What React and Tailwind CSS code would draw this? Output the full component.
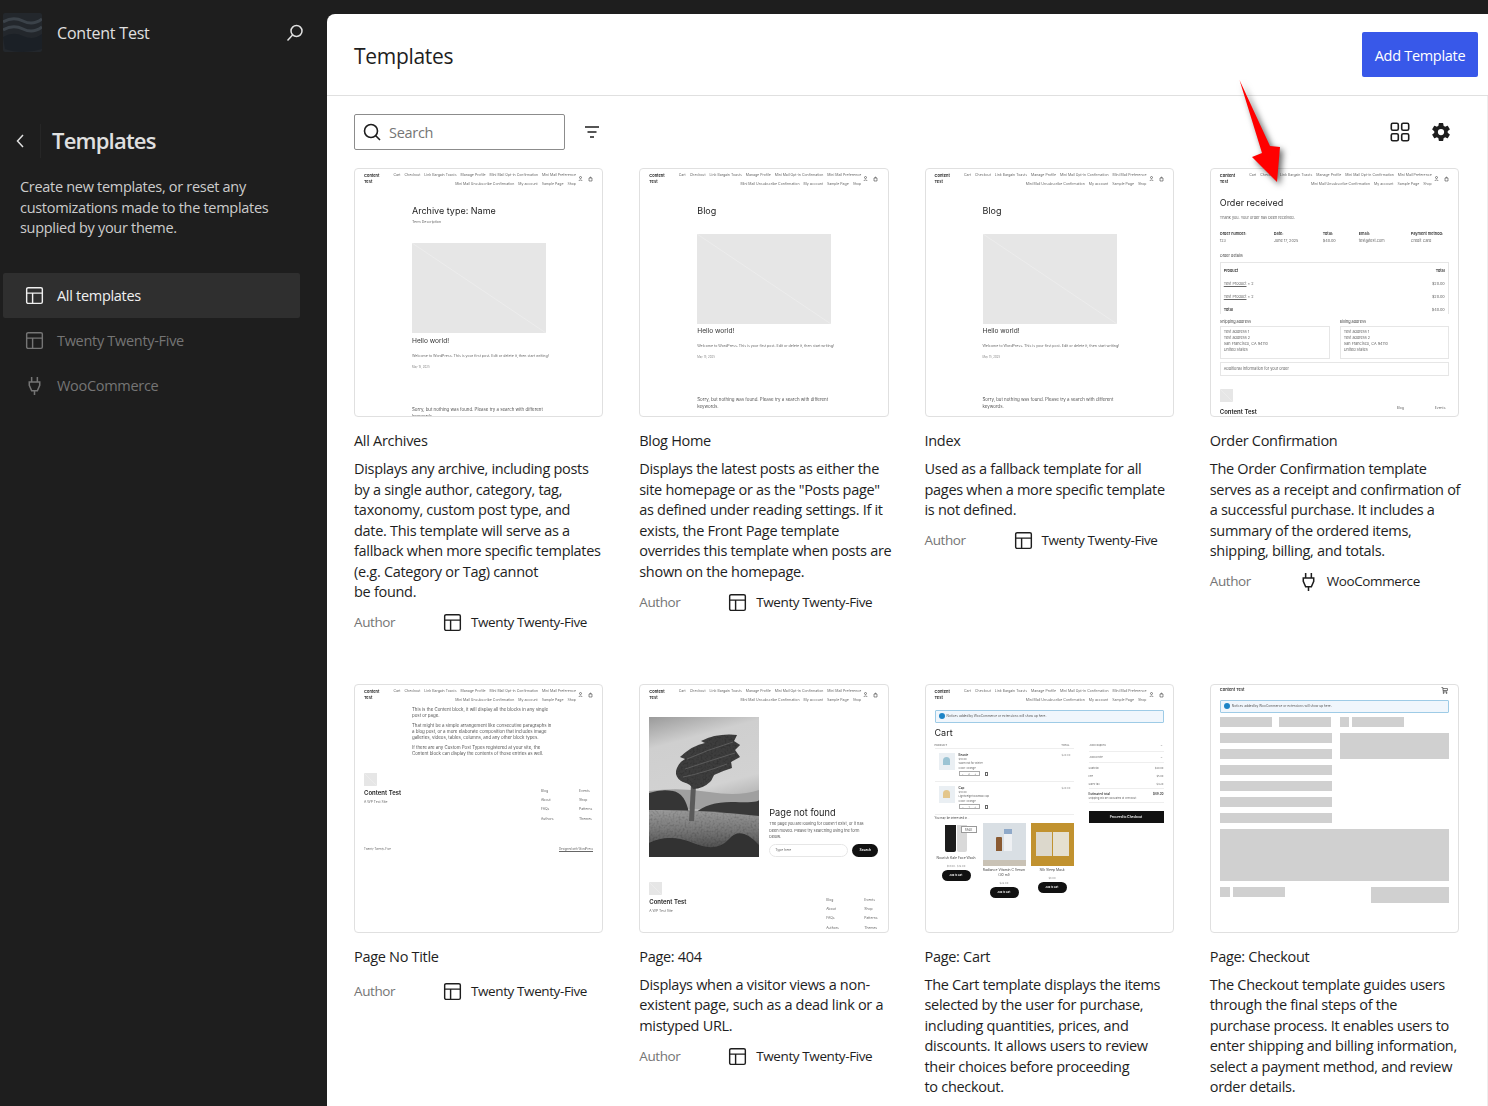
import { IoSettingsSharp } from "react-icons/io5";

const sans = "font-['Open_Sans','Noto_Sans',sans-serif]";

const LayoutIcon = ({ className }) => (
  <svg viewBox="0 0 20 20" fill="none" stroke="currentColor" strokeWidth="1.5" className={className}>
    <rect x="1.75" y="1.75" width="16.5" height="16.5" rx="1.5" />
    <path d="M2 7.5h16M8 7.5V18" />
  </svg>
);

const PlugIcon = ({ className }) => (
  <svg viewBox="0 0 20 20" fill="none" stroke="currentColor" strokeWidth="1.6" className={className}>
    <path d="M7 1v5M13 1v5M4.5 6.2h11v3.6L13 15.5h-6L4.5 9.8zM10 15.5V20" />
  </svg>
);

const cards = [
  {
    title: "All Archives",
    desc: "Displays any archive, including posts\nby a single author, category, tag,\ntaxonomy, custom post type, and\ndate. This template will serve as a\nfallback when more specific templates\n(e.g. Category or Tag) cannot\nbe found.",
    author: "Twenty Twenty-Five",
    thumb: "archive",
  },
  {
    title: "Blog Home",
    desc: "Displays the latest posts as either the\nsite homepage or as the \"Posts page\"\nas defined under reading settings. If it\nexists, the Front Page template\noverrides this template when posts are\nshown on the homepage.",
    author: "Twenty Twenty-Five",
    thumb: "blog",
  },
  {
    title: "Index",
    desc: "Used as a fallback template for all\npages when a more specific template\nis not defined.",
    author: "Twenty Twenty-Five",
    thumb: "blog",
  },
  {
    title: "Order Confirmation",
    desc: "The Order Confirmation template\nserves as a receipt and confirmation of\na successful purchase. It includes a\nsummary of the ordered items,\nshipping, billing, and totals.",
    author: "WooCommerce",
    thumb: "order",
    plug: true,
  },
  {
    title: "Page No Title",
    desc: "",
    author: "Twenty Twenty-Five",
    thumb: "notitle",
  },
  {
    title: "Page: 404",
    desc: "Displays when a visitor views a non-\nexistent page, such as a dead link or a\nmistyped URL.",
    author: "Twenty Twenty-Five",
    thumb: "404",
  },
  {
    title: "Page: Cart",
    desc: "The Cart template displays the items\nselected by the user for purchase,\nincluding quantities, prices, and\ndiscounts. It allows users to review\ntheir choices before proceeding\nto checkout.",
    author: "WooCommerce",
    thumb: "cart",
    plug: true,
  },
  {
    title: "Page: Checkout",
    desc: "The Checkout template guides users\nthrough the final steps of the\npurchase process. It enables users to\nenter shipping and billing information,\nselect a payment method, and review\norder details.",
    author: "WooCommerce",
    thumb: "checkout",
    plug: true,
  },
];

const MiniNav = () => (
  <div className="flex pl-[10px] pt-[3px] h-[20px]">
    <div className="w-[24px] mt-[2px] text-[4px] leading-[6px] font-semibold text-[#222]">Content Test</div>
    <div className="w-[188px] text-[3.5px] leading-[9px] text-[#666] text-right whitespace-nowrap">
      <div className="flex justify-end gap-[4px]">
        <span>Cart</span><span>Checkout</span><span>Link Bargain Toasts</span><span>Manage Profile</span><span>Mini Mail Opt-in Confirmation</span><span>Mini Mail Preference</span>
      </div>
      <div className="flex justify-end gap-[4px]">
        <span>Mini Mail Unsubscribe Confirmation</span><span>My account</span><span>Sample Page</span><span>Shop</span>
      </div>
    </div>
    <svg viewBox="0 0 16 6" fill="none" stroke="#222" strokeWidth="0.5" className="ml-[2px] mt-[5px] w-[16px] h-[6px]">
      <circle cx="2.5" cy="1.5" r="1" />
      <path d="M0.8 5C1 3.6 4 3.6 4.2 5" />
      <path d="M11 2h3v3h-3zM11.8 2C11.8 0.8 13.2 0.8 13.2 2" />
    </svg>
  </div>
);

const Placeholder = () => (
  <svg viewBox="0 0 134 90" preserveAspectRatio="none" className="w-[134px] h-[90px] block">
    <rect width="134" height="90" fill="#e6e6e6" />
    <path d="M0 0L134 90" stroke="#ececec" strokeWidth="1" />
  </svg>
);

const MiniSquare = () => (
  <svg viewBox="0 0 13 13" className="w-[13px] h-[13px] block">
    <rect width="13" height="13" fill="#e6e6e6" />
    <path d="M0 0L13 13" stroke="#ececec" strokeWidth="1" />
  </svg>
);

const MiniFooter = () => (
  <div className="flex justify-between px-[10px]">
    <div className="pt-[3px]">
      <MiniSquare />
      <div className="mt-[3px] text-[6px] leading-[8px] font-semibold text-[#222]">Content Test</div>
      <div className="mt-[3px] text-[3.4px] leading-[5px] text-[#666]">A WP Test Site</div>
    </div>
    <div className="flex mt-[17px] w-[52px] justify-between text-[3.4px] leading-[9.4px] text-[#666]">
      <div><div>Blog</div><div>About</div><div>FAQs</div><div>Authors</div></div>
      <div className="w-[14px]"><div>Events</div><div>Shop</div><div>Patterns</div><div>Themes</div></div>
    </div>
  </div>
);

const ArchiveThumb = ({ blog }) => (
  <div>
    <MiniNav />
    <div className="ml-[58px] w-[160px] pt-[17px]">
      <div className="text-[9px] leading-[12px] text-[#222]">{blog ? "Blog" : "Archive type: Name"}</div>
      {blog ? <div className="h-[17px]" /> : <div className="mt-[3px] mb-[18px] text-[3.6px] leading-[5px] text-[#666]">Term Description</div>}
      <Placeholder />
      <div className={`${blog ? "mt-[3px]" : "mt-[4px]"} text-[6.6px] leading-[9px] text-[#333]`}>Hello world!</div>
      <div className="mt-[8px] text-[3.6px] leading-[5px] text-[#666] whitespace-nowrap">Welcome to WordPress. This is your first post. Edit or delete it, then start writing!</div>
      <div className="mt-[6px] text-[2.8px] leading-[4px] text-[#888]">May 15, 2025</div>
      <div className="mt-[37px] w-[135px] text-[4.4px] leading-[7px] text-[#555]">Sorry, but nothing was found. Please try a search with different keywords.</div>
    </div>
  </div>
);

const OrderThumb = () => (
  <div>
    <MiniNav />
    <div className="px-[10px] text-[#666] text-[3.8px] leading-[6px]">
      <div className="mt-[9px] text-[9px] leading-[12px] text-[#222]">Order received</div>
      <div className="mt-[6px]">Thank you. Your order has been received.</div>
      <div className="mt-[10px] flex">
        <div className="w-[54px]"><div className="font-semibold text-[#333]">Order number:</div><div className="mt-[1px]">123</div></div>
        <div className="w-[49px]"><div className="font-semibold text-[#333]">Date:</div><div className="mt-[1px]">June 17, 2025</div></div>
        <div className="w-[36px]"><div className="font-semibold text-[#333]">Total:</div><div className="mt-[1px]">$40.00</div></div>
        <div className="w-[52px]"><div className="font-semibold text-[#333]">Email:</div><div className="mt-[1px]">test@test.com</div></div>
        <div><div className="font-semibold text-[#333] whitespace-nowrap">Payment method:</div><div className="mt-[1px]">Credit Card</div></div>
      </div>
      <div className="mt-[9px] text-[#444]">Order details</div>
      <div className="mt-[3px] h-[52px] border border-b-0 border-[#e6e6e6] px-[3px] pt-[1px] leading-[13px]">
        <div className="flex justify-between font-semibold text-[#333]"><span>Product</span><span>Total</span></div>
        <div className="flex justify-between"><span><span className="underline">Test Product</span> × 2</span><span>$20.00</span></div>
        <div className="flex justify-between"><span><span className="underline">Test Product</span> × 2</span><span>$20.00</span></div>
        <div className="flex justify-between"><span className="font-semibold text-[#333]">Total</span><span>$40.00</span></div>
      </div>
      <div className="mt-[5px] flex justify-between text-[#444]"><span className="w-[110px]">Shipping address</span><span className="w-[109px]">Billing address</span></div>
      <div className="mt-[1px] flex justify-between">
        <div className="w-[110px] h-[33px] border border-[#e6e6e6] px-[3px] pt-[2px]">Test address 1<br />Test address 2<br />San Francisco, CA 94110<br />United States</div>
        <div className="w-[109px] h-[33px] border border-[#e6e6e6] px-[3px] pt-[2px]">Test address 1<br />Test address 2<br />San Francisco, CA 94110<br />United States</div>
      </div>
      <div className="mt-[3px] h-[14px] border border-[#e6e6e6] px-[3px] pt-[3px]">Additional information for your order</div>
      <div className="mt-[13px] flex justify-between">
        <div>
          <MiniSquare />
          <div className="mt-[6px] text-[6px] leading-[8px] font-semibold text-[#222]">Content Test</div>
        </div>
        <div className="flex w-[52px] justify-between mt-[16px] text-[3.4px]"><span>Blog</span><span className="w-[14px]">Events</span></div>
      </div>
    </div>
  </div>
);

const NoTitleThumb = () => (
  <div>
    <MiniNav />
    <div className="ml-[58px] w-[140px] mt-[3px] text-[4.4px] leading-[6px] text-[#555] h-[60px]">
      <p>This is the Content block, it will display all the blocks in any single post or page.</p>
      <p className="mt-[4px]">That might be a simple arrangement like consecutive paragraphs in a blog post, or a more elaborate composition that includes image galleries, videos, tables, columns, and any other block types.</p>
      <p className="mt-[4px]">If there are any Custom Post Types registered at your site, the Content block can display the contents of those entries as well.</p>
    </div>
    <div className="mt-[3px]"><MiniFooter /></div>
    <div className="mt-[23px] px-[10px] flex justify-between text-[2.8px] leading-[4px] text-[#666]">
      <span>Twenty Twenty-Five</span><span className="underline">Designed with WordPress</span>
    </div>
  </div>
);

const TreePhoto = () => (
  <svg viewBox="0 0 110 140" className="w-[110px] h-[140px] block">
    <defs>
      <linearGradient id="sky" x1="0" y1="0" x2="0.3" y2="1">
        <stop offset="0" stopColor="#9a9a9a" />
        <stop offset="0.3" stopColor="#cfcfcf" />
        <stop offset="0.8" stopColor="#d2d2d2" />
        <stop offset="1" stopColor="#b4b4b4" />
      </linearGradient>
      <linearGradient id="grass" x1="0" y1="0" x2="0" y2="1">
        <stop offset="0" stopColor="#9a9a9a" />
        <stop offset="0.4" stopColor="#7a7a7a" />
        <stop offset="1" stopColor="#3c3c3c" />
      </linearGradient>
      <filter id="soft" x="-5%" y="-5%" width="110%" height="110%">
        <feGaussianBlur stdDeviation="0.6" />
      </filter>
      <filter id="grain" x="0" y="0" width="100%" height="100%">
        <feTurbulence type="fractalNoise" baseFrequency="0.5" numOctaves="2" seed="4" />
        <feColorMatrix values="0 0 0 0 0 0 0 0 0 0 0 0 0 0 0 0 0 0 -0.8 0.45" />
        <feComposite in2="SourceGraphic" operator="in" />
        <feMerge>
          <feMergeNode in="SourceGraphic" />
          <feMergeNode />
        </feMerge>
      </filter>
    </defs>
    <rect width="110" height="98" fill="url(#sky)" />
    <path d="M0 74Q30 70 60 75T110 73V92H0z" fill="#a0a0a0" filter="url(#soft)" />
    <path d="M0 76Q12 72 24 74T40 96H0z" fill="#353535" filter="url(#soft)" />
    <path d="M46 96Q60 84 86 85T110 82V100H46z" fill="#393939" filter="url(#soft)" />
    <g filter="url(#grain)">
      <path d="M0 93Q50 92 110 99V140H0z" fill="url(#grass)" />
    </g>
    <path d="M0 126Q20 116 44 126T80 122T110 128V140H0z" fill="#303030" filter="url(#soft)" />
    <path d="M42 68L47 68L45 104H40z" fill="#5a5a5a" />
    <g filter="url(#grain)">
      <path d="M27 54Q29 46 36 42L31 40Q44 28 56 26L52 24Q68 16 88 18L85 24L91 28L86 33L91 40L82 45L83 51Q73 54 65 58L62 64Q54 72 44 72Q42 67 34 65Q28 62 27 57z" fill="#3e3e3e" />
    </g>
    <path d="M38 42Q58 33 84 25M36 52Q60 44 86 36M34 60Q54 56 78 47" stroke="#6a6a6a" strokeWidth="0.7" fill="none" />
  </svg>
);

const NotFoundThumb = () => (
  <div>
    <MiniNav />
    <div className="flex mx-[10px] mt-[13px] h-[140px]">
      <TreePhoto />
      <div className="ml-[10px] flex-1 flex flex-col justify-end">
        <div className="text-[9.2px] leading-[12px] text-[#222]">Page not found</div>
        <div className="mt-[2px] text-[3.9px] leading-[6.5px] text-[#555] whitespace-nowrap">The page you are looking for doesn't exist, or it has<br />been moved. Please try searching using the form<br />below.</div>
        <div className="mt-[3px] flex justify-between">
          <div className="w-[79px] h-[13px] border border-[#e6e6e6] rounded-full pl-[5px] text-[3.4px] leading-[11px] text-[#666]">Type here</div>
          <div className="w-[26px] h-[13px] bg-[#111] rounded-full text-white text-center text-[3.4px] leading-[13px] font-semibold">Search</div>
        </div>
      </div>
    </div>
    <div className="mt-[22px]"><MiniFooter /></div>
  </div>
);

const Notice = () => (
  <div className="mx-[10px] h-[13px] flex items-center pl-[3px] gap-[2px] bg-[#f0f6fc] border border-[#9ecbe6] text-[3.2px] text-[#555] rounded-[1px]">
    <span className="w-[6px] h-[6px] rounded-full bg-[#1d84c6]" />
    Notices added by WooCommerce or extensions will show up here.
  </div>
);

const CartRow = ({ name, img, bg, qty }) => (
  <div className="flex h-[33px] pt-[4px] border-b border-[#eee]">
    <div className="w-[16px] h-[17px] ml-[4px] bg-[#eaeff3] flex items-center justify-center">
      <span className="w-[7px] h-[8px] rounded-t-full" style={{ background: img }} />
    </div>
    <div className="ml-[4px] flex-1 text-[2.6px] leading-[4.4px] text-[#666]">
      <div className="font-semibold text-[#333] text-[3px]">{name}</div>
      <div>$10.00</div>
      <div>{bg}</div>
      <div>Color: Orange</div>
      <div className="flex items-center">
        <div className="mt-[1px] w-[21px] h-[5px] border-[0.5px] border-[#aaa] flex justify-around items-center text-[2.6px] leading-[4px]">
          <span>−</span><span>{qty}</span><span>+</span>
        </div>
        <span className="ml-[5px] mt-[1px] w-[3px] h-[4px] border-[0.5px] border-[#666]" />
      </div>
    </div>
    <div className="w-[12px] text-[2.6px] leading-[4.4px] text-[#888]">$20.00</div>
  </div>
);

const ShopItem = ({ name, price, img }) => (
  <div className="w-[43px] flex flex-col items-center">
    {img}
    <div className="mt-[2px] w-full text-center text-[3.4px] leading-[5px] text-[#444]">{name}</div>
    <div className="mt-[3px] text-[2.6px] leading-[4px] text-[#888]">{price}</div>
    <div className="mt-[2px] w-[29px] h-[11px] rounded-full bg-[#111] text-white text-center text-[2.4px] leading-[11px] font-semibold">Add to cart</div>
  </div>
);

const CartThumb = () => (
  <div>
    <MiniNav />
    <div className="mt-[6px]"><Notice /></div>
    <div className="mx-[10px] mt-[4px] text-[9px] leading-[12px] text-[#222]">Cart</div>
    <div className="mx-[10px] mt-[4px] flex justify-between">
      <div className="w-[139px]">
        <div className="flex justify-between h-[6px] text-[2.6px] leading-[5px] text-[#555] border-b border-[#eee] pr-[4px]"><span>PRODUCT</span><span>TOTAL</span></div>
        <CartRow name="Beanie" img="#9cc4d4" bg="Warm hat for winter" qty="2" />
        <CartRow name="Cap" img="#e3c68c" bg="Lightweight baseball cap" qty="1" />
        <div className="mt-[1px] text-[2.8px] leading-[4px] text-[#444]">You may be interested in…</div>
        <div className="mt-[3px] flex justify-between">
          <ShopItem
            name="Nourish Kale Face Wash"
            price="$18.00 · $12.00"
            img={
              <div className="relative w-[43px] h-[31px] flex justify-center gap-[1px]">
                <span className="mt-[2px] w-[11px] h-[27px] bg-[#1c1c1c] rounded-b-[2px]" />
                <span className="mt-[2px] w-[10px] h-[27px] bg-[#d9d9d9] rounded-b-[2px]" />
                <span className="absolute top-[3px] right-[1px] w-[16px] h-[7px] bg-white border-[0.5px] border-[#999] text-center text-[3px] leading-[6px] text-[#444]">SALE</span>
              </div>
            }
          />
          <ShopItem
            name="Radiance Vitamin C Serum (30 ml)"
            price="$22.00"
            img={
              <div className="w-[43px] h-[43px] bg-[#d9dfe4] flex items-end justify-center gap-[2px] pb-[9px] border-b-[6px] border-[#c9c2b5]">
                <span className="w-[6px] h-[14px] bg-[#8a5a32] rounded-t-[1px]" />
                <span className="w-[8px] h-[22px] bg-[#eef0f3] border-t-[5px] border-[#8fa9c9]" />
              </div>
            }
          />
          <ShopItem
            name="Silk Sleep Mask"
            price="$8.00"
            img={
              <div className="w-[43px] h-[43px] bg-[#c1922f] flex items-center justify-center gap-[1px]">
                <span className="w-[16px] h-[24px] bg-[#dcd8cc]" />
                <span className="w-[16px] h-[24px] bg-[#e5e0d0]" />
              </div>
            }
          />
        </div>
      </div>
      <div className="w-[75px] text-[2.6px] leading-[4px] text-[#666]">
        <div className="h-[9px] border-b border-[#eee] flex justify-between px-[1px]"><span>Add coupons</span><span>⌄</span></div>
        <div className="mt-[3px] h-[8px] border-b border-[#eee] flex justify-between px-[1px]"><span>Add a note</span><span>⌄</span></div>
        <div className="mt-[3px] flex justify-between"><span>Subtotal</span><span>$40.00</span></div>
        <div className="mt-[4px] flex justify-between"><span>Fee</span><span>$5.00</span></div>
        <div className="mt-[4px] pb-[2px] flex justify-between border-b border-[#eee]"><span>Sales tax</span><span>$4.20</span></div>
        <div className="mt-[3px] flex justify-between font-semibold text-[#333] text-[3px]"><span>Estimated total</span><span>$49.20</span></div>
        <div className="pb-[2px] border-b border-[#eee]">Shipping will be calculated at checkout</div>
        <div className="mt-[8px] h-[12px] bg-[#111] text-white text-center text-[3.2px] leading-[12px] font-semibold">Proceed to Checkout</div>
      </div>
    </div>
  </div>
);

const Skel = ({ className }) => <div className={`bg-[#d0d0d0] ${className}`} />;

const CheckoutThumb = () => (
  <div>
    <div className="h-[16px] px-[10px] flex justify-between items-start pt-[3px]">
      <span className="text-[4px] leading-[6px] font-semibold text-[#333]">Content Test</span>
      <svg viewBox="0 0 8 8" fill="none" stroke="#222" strokeWidth="0.7" className="w-[7px] h-[7px] mr-[1px]">
        <path d="M0.5 0.5H2L2.6 5.5H7M2.2 1.8H7.4V4H2.5" />
        <circle cx="3" cy="6.8" r="0.6" />
        <circle cx="6.4" cy="6.8" r="0.6" />
      </svg>
    </div>
    <Notice />
    <div className="mx-[10px] mt-[4px] flex">
      <Skel className="w-[52px] h-[10px]" />
      <Skel className="ml-[7px] w-[52px] h-[10px]" />
      <Skel className="ml-[9px] w-[9px] h-[10px]" />
      <Skel className="ml-[3px] w-[52px] h-[10px]" />
    </div>
    <div className="mx-[10px] mt-[6px] flex justify-between">
      <div className="flex flex-col gap-[6px] w-[112px]">
        <Skel className="h-[10px]" />
        <Skel className="h-[10px]" />
        <Skel className="h-[10px]" />
        <Skel className="h-[10px]" />
        <Skel className="h-[10px]" />
        <Skel className="h-[10px]" />
      </div>
      <Skel className="w-[109px] h-[26px]" />
    </div>
    <Skel className="mx-[10px] mt-[6px] h-[52px]" />
    <div className="mx-[10px] mt-[6px] flex">
      <Skel className="w-[10px] h-[10px]" />
      <Skel className="ml-[3px] w-[52px] h-[10px]" />
      <Skel className="ml-auto w-[78px] h-[16px]" />
    </div>
  </div>
);

const Thumb = ({ kind }) => {
  const map = {
    archive: <ArchiveThumb />,
    blog: <ArchiveThumb blog />,
    order: <OrderThumb />,
    notitle: <NoTitleThumb />,
    404: <NotFoundThumb />,
    cart: <CartThumb />,
    checkout: <CheckoutThumb />,
  };
  return (
    <div className="h-[249px] border border-[#e0e0e0] rounded-[4px] overflow-hidden bg-white tracking-normal">
      <div className="w-[249px] h-[249px] -m-px blur-[0.25px] font-['Inter',sans-serif]">{map[kind]}</div>
    </div>
  );
};

const Card = ({ card }) => (
  <div className="text-[14.5px] tracking-[-0.3px]">
    <Thumb kind={card.thumb} />
    <div className="mt-[13px] leading-[21px] text-[#1e1e1e]">{card.title}</div>
    {card.desc && (
      <p className="mt-[8px] leading-[20.5px] text-[#1e1e1e] whitespace-pre">{card.desc}</p>
    )}
    <div className={`${card.desc ? "mt-[10px]" : "mt-[15px]"} h-[20px] flex items-center text-[13.5px] tracking-[-0.4px] text-[#757575]`}>
      <span className="w-[89px]">Author</span>
      {card.plug ? (
        <PlugIcon className="w-[19px] h-[19px] text-[#1e1e1e]" />
      ) : (
        <LayoutIcon className="w-[19px] h-[19px] text-[#1e1e1e]" />
      )}
      <span className="ml-[9px] text-[#1e1e1e]">{card.author}</span>
    </div>
  </div>
);

const Sidebar = () => (
  <aside className="w-[327px] shrink-0 text-[#e0e0e0]">
    <div className="flex items-start pl-[3px] pr-[22px] pt-[13px] h-[66px]">
      <svg viewBox="0 0 39 39" className="w-[39px] h-[39px] shrink-0 rounded-[2px]">
        <rect width="39" height="39" fill="#23272c" />
        <path d="M0 9Q10 3 20 8T39 6M0 17Q10 11 20 16T39 14" stroke="#3b4249" strokeWidth="3" fill="none" />
        <path d="M0 24Q10 18 20 23T39 21V36Q30 39 20 39T2 36z" fill="#1b2026" />
      </svg>
      <span className="ml-[15px] mt-[9px] text-[16px] leading-[22px] tracking-[-0.2px]">Content Test</span>
      <svg viewBox="0 0 20 20" fill="none" stroke="currentColor" strokeWidth="1.5" className="ml-auto mt-[10px] w-[20px] h-[20px]">
        <circle cx="11.5" cy="8" r="5.5" />
        <path d="M7.5 12L2.5 17.5" />
      </svg>
    </div>
    <div className="mt-[57px] h-[36px] flex items-center">
      <svg viewBox="0 0 10 16" fill="none" stroke="currentColor" strokeWidth="1.5" className="ml-[15px] w-[10px] h-[16px]">
        <path d="M8 2L2.5 8L8 14" />
      </svg>
      <div className="ml-[15px] w-px h-[34px] bg-[#262626]" />
      <h1 className="ml-[11px] -mt-[2px] text-[22px] font-semibold tracking-[-0.8px] text-[#e0e0e0]">Templates</h1>
    </div>
    <p className="mt-[18px] pl-[20px] text-[14.5px] leading-[20.5px] text-[#cccccc] tracking-[-0.3px] whitespace-pre-line">
      {"Create new templates, or reset any\ncustomizations made to the templates\nsupplied by your theme."}
    </p>
    <nav className="mt-[34px] ml-[3px] w-[297px] text-[14.5px] tracking-[-0.3px]">
      <div className="h-[45px] flex items-center pl-[22px] bg-[#2f2f2f] rounded-[2px] text-[#f0f0f0] font-medium">
        <LayoutIcon className="w-[19px] h-[19px]" />
        <span className="ml-[13px] pt-[2px]">All templates</span>
      </div>
      <div className="h-[45px] flex items-center pl-[22px] text-[#757575]">
        <LayoutIcon className="w-[19px] h-[19px]" />
        <span className="ml-[13px] pt-[2px]">Twenty Twenty-Five</span>
      </div>
      <div className="h-[45px] flex items-center pl-[22px] text-[#757575]">
        <PlugIcon className="w-[19px] h-[19px]" />
        <span className="ml-[13px] pt-[2px]">WooCommerce</span>
      </div>
    </nav>
  </aside>
);

export default function App() {
  return (
    <div className={`relative h-[1106px] overflow-hidden bg-[#1e1e1e] flex ${sans}`}>
      <Sidebar />
      <main className="flex-1 mt-[14px] bg-white rounded-tl-[8px] overflow-hidden">
        <header className="h-[82px] border-b border-[#e0e0e0] flex items-start justify-between pl-[27px] pr-[10px]">
          <h2 className="mt-[27px] text-[21px] leading-[30px] tracking-[-0.3px] text-[#1e1e1e]">Templates</h2>
          <button className="mt-[18px] w-[116px] h-[45px] pt-[2px] bg-[#3858e9] rounded-[2px] text-white text-[14.5px] tracking-[-0.3px]">Add Template</button>
        </header>
        <div className="pl-[27px] pr-[28px] border-r border-[#eeeeee] h-full">
          <div className="h-[72px] flex items-center">
            <div className="w-[211px] h-[36px] border border-[#8c8c8c] rounded-[2px] flex items-center pl-[7px]">
              <svg viewBox="0 0 20 20" fill="none" stroke="#1e1e1e" strokeWidth="1.6" className="w-[20px] h-[20px]">
                <circle cx="9" cy="9" r="6.5" />
                <path d="M13.5 13.5L18 18" />
              </svg>
              <span className="ml-[7px] pt-px text-[14.5px] tracking-[-0.3px] text-[#757575]">Search</span>
            </div>
            <svg viewBox="0 0 16 14" fill="none" stroke="#1e1e1e" strokeWidth="1.6" className="ml-[19px] w-[16px] h-[14px]">
              <path d="M1 2h14M3.5 7h9M6 12h4" />
            </svg>
            <svg viewBox="0 0 20 20" fill="none" stroke="#1e1e1e" strokeWidth="1.6" className="ml-auto w-[20px] h-[20px]">
              <rect x="1.3" y="1.3" width="7" height="7" rx="1.5" />
              <rect x="11.7" y="1.3" width="7" height="7" rx="1.5" />
              <rect x="1.3" y="11.7" width="7" height="7" rx="1.5" />
              <rect x="11.7" y="11.7" width="7" height="7" rx="1.5" />
            </svg>
            <IoSettingsSharp className="ml-[21px] mr-[8px] w-[20px] h-[20px] text-[#1e1e1e]" />
          </div>
          <div className="grid grid-cols-4 gap-x-[36px] gap-y-[51px] items-start">
            {cards.map((card) => (
              <Card key={card.title} card={card} />
            ))}
          </div>
        </div>
      </main>
      <svg viewBox="0 0 60 120" className="absolute left-[1230px] top-[70px] w-[60px] h-[120px] drop-shadow-[3px_3px_3px_rgba(0,0,0,0.6)]">
        <path d="M9.5 10L40 76L50 77L47 112L22 87L32 83z" fill="#ff0000" />
      </svg>
    </div>
  );
}
